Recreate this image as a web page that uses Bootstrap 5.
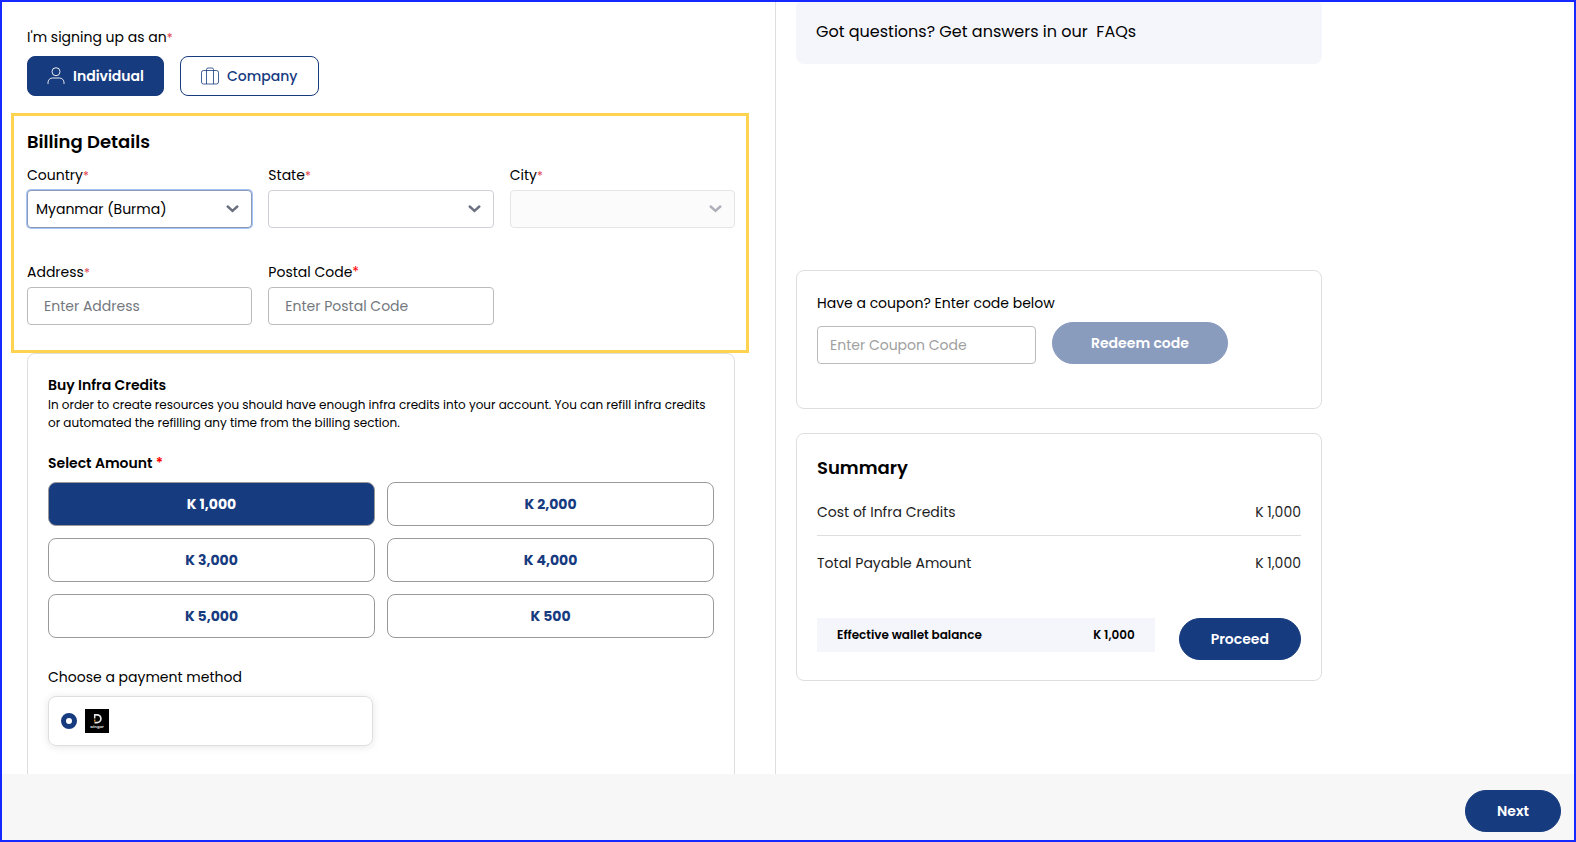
<!DOCTYPE html>
<html lang="en">
<head>
<meta charset="utf-8">
<meta name="viewport" content="width=device-width, initial-scale=1">
<title>Billing Details</title>
<link href="https://cdn.jsdelivr.net/npm/bootstrap@5.3.0/dist/css/bootstrap.min.css" rel="stylesheet">
<style>
:root { --navy: #173b7f; --line: #dedede; }
body { font-family: Poppins, Inter, "Open Sans", sans-serif; font-size: 14px; line-height: 20px; color: #000; }
.app-frame { border: 2px solid #1428ff; height: 100vh; }
.panes { display: grid; grid-template-columns: 387fr 399fr; min-height: 0; }
.pane-form { border-right: 1px solid var(--line); padding: 25px 26px 0 9px; min-height: 0; overflow: hidden; }
.inset { margin-left: 16px; margin-right: 14px; }
.pane-side { padding-left: 20px; overflow: hidden; }
.side-stack { max-width: 526px; }
.req { color: #e0434f; font-size: 12px; }
.req-strong { color: #f00; }
.btn { --bs-btn-font-size: 14px; --bs-btn-line-height: 20px; --bs-btn-font-weight: 600; }
.btn-navy { --bs-btn-color: #fff; --bs-btn-bg: var(--navy); --bs-btn-border-color: var(--navy); --bs-btn-hover-color: #fff; --bs-btn-hover-bg: #122f66; --bs-btn-disabled-color: #fff; --bs-btn-disabled-bg: var(--navy); --bs-btn-disabled-border-color: var(--navy); --bs-btn-disabled-opacity: .5; }
.btn-type { --bs-btn-border-radius: 8px; --bs-btn-padding-x: 19px; --bs-btn-padding-y: 9px; min-width: 137px; }
.btn-line { --bs-btn-color: var(--navy); --bs-btn-border-color: var(--navy); --bs-btn-font-weight: 500; --bs-btn-padding-x: 20px; --bs-btn-hover-color: var(--navy); --bs-btn-hover-bg: #f5f6fc; }
.btn-round { --bs-btn-border-radius: 21px; --bs-btn-padding-y: 10px; --bs-btn-padding-x: 31px; }
.btn-amount { --bs-btn-border-radius: 8px; --bs-btn-padding-y: 11px; --bs-btn-font-weight: 700; --bs-btn-color: var(--navy); --bs-btn-border-color: #999; --bs-btn-hover-color: var(--navy); --bs-btn-hover-border-color: var(--navy); --bs-btn-active-color: #fff; --bs-btn-active-bg: var(--navy); --bs-btn-active-border-color: #999; }
.billing { border: 3px solid #ffd24f; padding: 14px 11px 25px 13px; margin-top: 17px; }
.section-title { font-size: 18px; line-height: 24px; font-weight: 600; margin: 0; }
.field-grid { display: grid; grid-template-columns: repeat(3, minmax(0, 1fr)); column-gap: 16px; row-gap: 34px; margin-top: 11px; }
.form-label { margin-bottom: 5px; display: block; }
.form-label .req { line-height: 12px; }
.form-control, .form-select { font-size: 14px; line-height: 20px; height: 38px; border-color: #bbb; border-radius: 4px; color: #000; }
.form-control { padding: 8px 16px; }
.form-control::placeholder { color: #74787e; }
.form-select { padding: 8px 32px 8px 8px; border-color: #ced0d8; background-position: right 12px center; background-size: 13px 8px; background-image: url("data:image/svg+xml,%3Csvg xmlns='http://www.w3.org/2000/svg' viewBox='0 0 13 8'%3E%3Cpath d='M1.7 1.5l4.8 4.3 4.8-4.3' fill='none' stroke='%236b7080' stroke-width='2.4' stroke-linecap='round'/%3E%3C/svg%3E"); }
.form-select.is-current { border-color: #8c9ab8; box-shadow: 0 0 0 1px #a6c5f7; }
.form-select:disabled { background-color: #f8f8f8; opacity: .55; }
.credits { border: 1px solid var(--line); border-radius: 8px 8px 0 0; padding: 21px 20px 100px; }
.sub-title { font-size: 14px; line-height: 20px; font-weight: 600; margin: 0; }
.note { font-size: 12px; line-height: 18px; margin: 1px 0 21px; }
.amount-grid { display: grid; grid-template-columns: 1fr 1fr; gap: 12px; margin: 9px 0 29px; }
.pay-option { border: 1px solid var(--line); border-radius: 8px; box-shadow: 0 1px 8px rgba(0,0,0,.1); padding: 12px; width: calc(50% - 8px); gap: 8px; margin-top: 9px; }
.pay-option .form-check-input { width: 16px; height: 16px; margin: 0; border: 5px solid var(--navy); background: #fff; }
.faq { background: #f5f6fc; border-radius: 4px 4px 8px 8px; padding: 18px 20px 20px; font-size: 16px; line-height: 24px; }
.side-card { border: 1px solid var(--line); border-radius: 8px; padding: 20px; }
.coupon { margin: 206px 0 24px; padding-top: 22px; padding-bottom: 44px; }
.coupon-row { margin-top: 9px; }
.coupon-field { width: 219px; }
.coupon-field .form-control { padding: 8px 12px; }
.coupon-field .form-control::placeholder { color: #a0a0a0; }
.btn-redeem { --bs-btn-padding-x: 38px; }
.summary { padding-top: 22px; }
.sum-row { color: #1c1c1c; padding: 22px 0 13px; }
.sum-rule { border-top: 1px solid var(--line); padding: 17px 0 16px; }
.pay-row { padding-top: 29px; }
.wallet { background: #f5f6fc; padding: 8px 20px; font-size: 12px; line-height: 18px; font-weight: 600; }
.bottom-bar { background: #f7f7f7; padding: 16px 13px 8px; }
</style>
</head>
<body>
<div class="app-frame d-flex flex-column">
  <main class="panes flex-fill">
    <form class="pane-form">
      <div class="inset">
        <div id="typeLabel" class="mb-2">I'm signing up as an<span class="req">*</span></div>
        <div class="d-flex gap-3" role="group" aria-labelledby="typeLabel">
          <button type="button" class="btn btn-navy btn-type d-flex align-items-center justify-content-center gap-2">
            <svg width="18" height="18" viewBox="0 0 18 18" fill="none" stroke="#fff" stroke-width=".9" aria-hidden="true"><circle cx="9" cy="4.700" r="4"/><path d="M1 17v-1.500a4.500 4.500 0 0 1 4.500-4.500h7a4.500 4.500 0 0 1 4.500 4.500v1.500"/></svg>
            Individual
          </button>
          <button type="button" class="btn btn-line btn-type d-flex align-items-center justify-content-center gap-2">
            <svg width="18" height="18" viewBox="0 0 18 18" fill="none" stroke="#173b7f" stroke-width=".8" aria-hidden="true"><rect x=".5" y="3.500" width="17" height="13.500" rx="2"/><path d="M5.500 17V2.500a1.500 1.500 0 0 1 1.500-1.500h4a1.500 1.500 0 0 1 1.500 1.500V17"/></svg>
            Company
          </button>
        </div>
      </div>

      <section class="billing">
        <h2 class="section-title">Billing Details</h2>
        <div class="field-grid">
          <div>
            <label class="form-label" for="country">Country<span class="req">*</span></label>
            <select id="country" class="form-select is-current"><option>Myanmar (Burma)</option></select>
          </div>
          <div>
            <label class="form-label" for="state">State<span class="req">*</span></label>
            <select id="state" class="form-select"><option></option></select>
          </div>
          <div>
            <label class="form-label" for="city">City<span class="req">*</span></label>
            <select id="city" class="form-select" disabled><option></option></select>
          </div>
          <div>
            <label class="form-label" for="address">Address<span class="req">*</span></label>
            <input id="address" type="text" class="form-control" placeholder="Enter Address">
          </div>
          <div>
            <label class="form-label" for="postal">Postal Code<span class="req-strong">*</span></label>
            <input id="postal" type="text" class="form-control" placeholder="Enter Postal Code">
          </div>
        </div>
      </section>

      <section class="inset credits">
        <h3 class="sub-title">Buy Infra Credits</h3>
        <p class="note">In order to create resources you should have enough infra credits into your account. You can refill infra credits or automated the refilling any time from the billing section.</p>
        <h3 class="sub-title">Select Amount <span class="req-strong">*</span></h3>
        <div class="amount-grid">
          <button type="button" class="btn btn-amount active">K 1,000</button>
          <button type="button" class="btn btn-amount">K 2,000</button>
          <button type="button" class="btn btn-amount">K 3,000</button>
          <button type="button" class="btn btn-amount">K 4,000</button>
          <button type="button" class="btn btn-amount">K 5,000</button>
          <button type="button" class="btn btn-amount">K 500</button>
        </div>
        <div>Choose a payment method</div>
        <div class="pay-option d-flex align-items-center">
          <input class="form-check-input" type="radio" name="method" id="dinger" checked>
          <label for="dinger" class="d-flex">
            <svg width="24" height="24" viewBox="0 0 24 24" role="img" aria-label="Dinger">
              <rect width="24" height="24" fill="#000"/>
              <path d="M9 5.800h3a3.900 3.900 0 0 1 0 7.800H9.500" fill="none" stroke="#e8e8e8" stroke-width="1.700"/>
              <path d="M9.700 5v4.500" stroke="#e8e8e8" stroke-width="1.500"/>
              <path d="M9.700 10.500v2" stroke="#c98a2b" stroke-width="1.500"/>
              <text x="12" y="18.500" font-size="4" font-weight="700" text-anchor="middle" fill="#ccc">Dinger</text>
            </svg>
          </label>
        </div>
      </section>
    </form>

    <aside class="pane-side">
      <div class="side-stack">
        <div class="faq">Got questions? Get answers in our&nbsp; <a href="#faqs" class="text-reset text-decoration-none">FAQs</a></div>

        <section class="side-card coupon">
          <label for="coupon" class="d-block">Have a coupon? Enter code below</label>
          <div class="coupon-row d-flex align-items-end gap-3">
            <div class="coupon-field"><input id="coupon" type="text" class="form-control" placeholder="Enter Coupon Code"></div>
            <button type="button" class="btn btn-navy btn-round btn-redeem" disabled>Redeem code</button>
          </div>
        </section>

        <section class="side-card summary">
          <h2 class="section-title">Summary</h2>
          <div class="sum-row d-flex justify-content-between"><span>Cost of Infra Credits</span><span>K 1,000</span></div>
          <div class="sum-row sum-rule d-flex justify-content-between"><span>Total Payable Amount</span><span>K 1,000</span></div>
          <div class="pay-row d-flex align-items-start gap-4">
            <div class="wallet flex-fill d-flex justify-content-between"><span>Effective wallet balance</span><span>K 1,000</span></div>
            <button type="button" class="btn btn-navy btn-round">Proceed</button>
          </div>
        </section>
      </div>
    </aside>
  </main>
  <footer class="bottom-bar d-flex justify-content-end">
    <button type="button" class="btn btn-navy btn-round">Next</button>
  </footer>
</div>
<script src="https://cdn.jsdelivr.net/npm/bootstrap@5.3.0/dist/js/bootstrap.bundle.min.js"></script>
</body>
</html>
